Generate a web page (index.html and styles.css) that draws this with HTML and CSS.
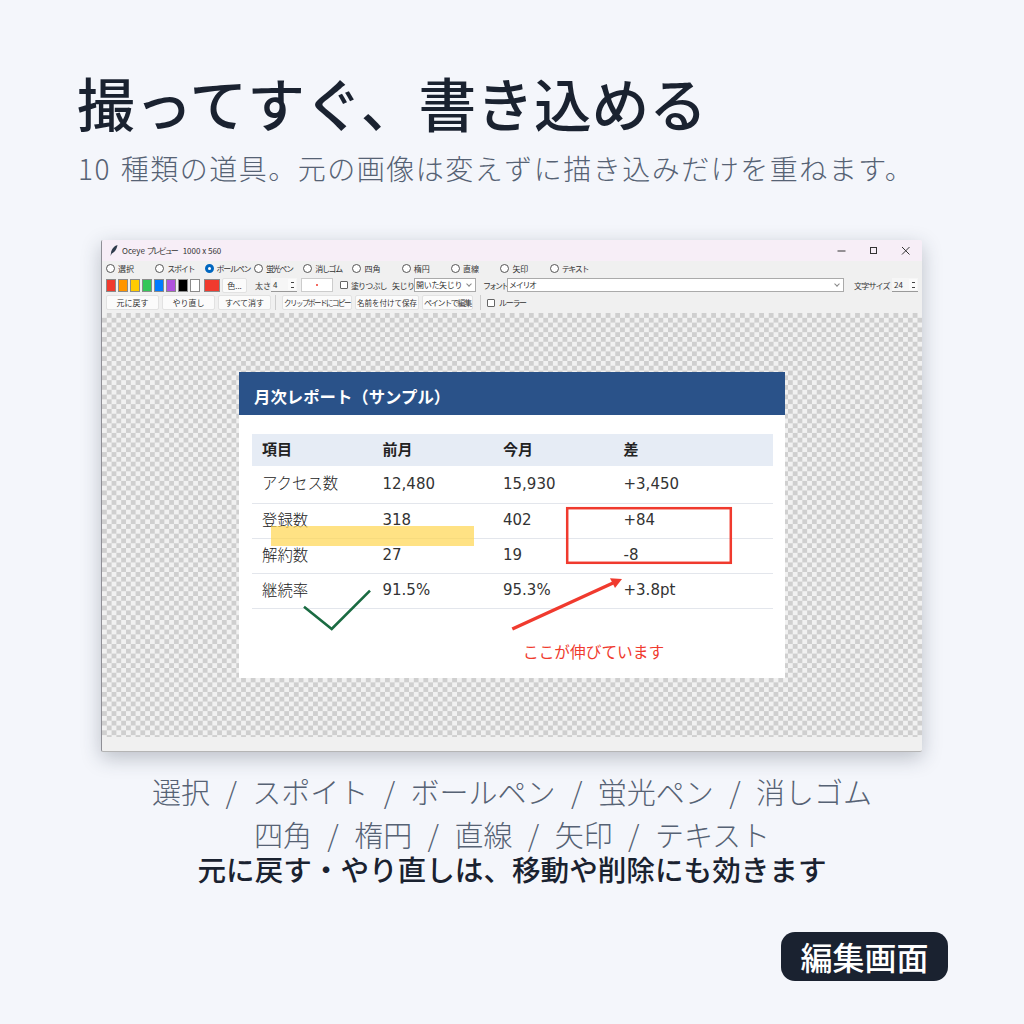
FILE: index.html
```html
<!DOCTYPE html>
<html lang="ja">
<head>
    <meta charset="UTF-8">
    <title>編集画面</title>
    <link rel="stylesheet" href="styles.css">
</head>
<body>
    <h1 class="title">撮ってすぐ、書き込める</h1>
    <p class="subtitle">10 種類の道具。元の画像は変えずに描き込みだけを重ねます。</p>

    <div class="window">
        <div class="titlebar">
            <svg class="feather" width="8" height="11" viewBox="0 0 8 11"><path d="M7.500 0C4 1 1.500 4 1 8L0.500 11L1.800 8.500C4.500 7.500 6.800 4 7.500 0Z" fill="#2f3b4c"/></svg>
            <span class="app-name">Oceye <span class="tight">プレビュー</span><span class="app-size">1000 x 560</span></span>
            <div class="win-buttons">
                <svg width="10" height="10" viewBox="0 0 10 10"><path d="M0.500 5H8.500" stroke="#333" fill="none"/></svg>
                <svg width="10" height="10" viewBox="0 0 10 10"><rect x="1.500" y="1.500" width="6" height="6" stroke="#333" fill="none"/></svg>
                <svg width="10" height="10" viewBox="0 0 10 10"><path d="M1 1L8.500 8.500M8.500 1L1 8.500" stroke="#333" fill="none"/></svg>
            </div>
        </div>

        <div class="tools">
            <label class="tool"><i class="radio"></i>選択</label>
            <label class="tool tight"><i class="radio"></i>スポイト</label>
            <label class="tool tight"><i class="radio on"></i>ボールペン</label>
            <label class="tool tight"><i class="radio"></i>蛍光ペン</label>
            <label class="tool tight"><i class="radio"></i>消しゴム</label>
            <label class="tool"><i class="radio"></i>四角</label>
            <label class="tool"><i class="radio"></i>楕円</label>
            <label class="tool"><i class="radio"></i>直線</label>
            <label class="tool"><i class="radio"></i>矢印</label>
            <label class="tool tight"><i class="radio"></i>テキスト</label>
        </div>

        <div class="options">
            <div class="swatches">
                <i class="swatch c-red"></i><i class="swatch c-orange"></i><i class="swatch c-yellow"></i><i class="swatch c-green"></i><i class="swatch c-blue"></i><i class="swatch c-purple"></i><i class="swatch c-black"></i><i class="swatch c-white"></i>
            </div>
            <i class="current c-red"></i>
            <span class="btn color-btn">色...</span>
            <span class="lbl size-lbl">太さ</span>
            <span class="spin size-spin">4<b class="arrows"></b></span>
            <span class="preview"><i></i></span>
            <label class="check fill-check"><i class="box"></i>塗りつぶし</label>
            <span class="lbl arrow-lbl">矢じり</span>
            <span class="combo arrow-combo">開いた矢じり</span>
            <span class="lbl font-lbl">フォント</span>
            <span class="combo font-combo tight">メイリオ</span>
            <span class="lbl text-lbl">文字サイズ</span>
            <span class="spin text-spin">24<b class="arrows"></b></span>
        </div>

        <div class="actions">
            <span class="btn wide">元に戻す</span>
            <span class="btn wide">やり直し</span>
            <span class="btn wide">すべて消す</span>
            <i class="sep"></i>
            <span class="btn copy-btn">クリップボードにコピー</span>
            <span class="btn save-btn">名前を付けて保存</span>
            <span class="btn paint-btn tight">ペイントで編集</span>
            <i class="sep"></i>
            <label class="check ruler tight"><i class="box"></i>ルーラー</label>
        </div>

        <div class="canvas">
            <div class="report">
                <div class="report-head">月次レポート（サンプル）</div>
                <table class="report-table">
                    <thead>
                        <tr><th>項目</th><th>前月</th><th>今月</th><th>差</th></tr>
                    </thead>
                    <tbody>
                        <tr class="first"><td>アクセス数</td><td>12,480</td><td>15,930</td><td>+3,450</td></tr>
                        <tr><td>登録数</td><td>318</td><td>402</td><td>+84</td></tr>
                        <tr><td>解約数</td><td>27</td><td>19</td><td>-8</td></tr>
                        <tr><td>継続率</td><td>91.5%</td><td>95.3%</td><td>+3.8pt</td></tr>
                    </tbody>
                </table>

                <i class="marker"></i>
                <svg class="ink" width="546" height="306" viewBox="0 0 546 306">
                    <rect x="328.200" y="136.200" width="163.600" height="54.600" fill="none" stroke="#f03a2e" stroke-width="2.500"/>
                    <path d="M65 234.700L92.700 257L131 218.700" fill="none" stroke="#1a6b42" stroke-width="2.600"/>
                    <path d="M273.300 257L374 211" fill="none" stroke="#f03a2e" stroke-width="3.400"/>
                    <path d="M383 207L371 206.300L376 216Z" fill="#f03a2e"/>
                </svg>
                <span class="note">ここが伸びています</span>
            </div>
        </div>
        <div class="statusbar"></div>
    </div>

    <p class="tool-list">選択 / スポイト / ボールペン / 蛍光ペン / 消しゴム</p>
    <p class="tool-list second">四角 / 楕円 / 直線 / 矢印 / テキスト</p>
    <p class="undo-note">元に戻す・やり直しは、移動や削除にも効きます</p>

    <div class="footer">
        <span class="badge">編集画面</span>
    </div>
</body>
</html>
```

FILE: styles.css
```css
body {
    margin: 0;
    height: 1024px;
    overflow: hidden;
    background: #f4f6fb;
    font-family: "Noto Sans CJK JP", "Noto Sans", sans-serif;
    color: #1a2230;
}
.title {
    margin: 0;
    padding: 63px 0 0 77px;
    font-size: 57.700px;
    line-height: 78px;
    font-weight: 500;
}
.subtitle {
    margin: 0;
    padding: 6px 0 0 78px;
    font-size: 28px;
    line-height: 42px;
    font-weight: 300;
    letter-spacing: 1.500px;
    word-spacing: 2px;
    color: #566274;
}
.window {
    position: relative;
    width: 821px;
    height: 512px;
    margin: 51px 0 0 101px;
    background: #f0f0f0;
    border-left: 1px solid #8f8f96;
    border-bottom: 1px solid #b5b5b5;
    box-sizing: border-box;
    border-radius: 2px;
    box-shadow: 0 6px 20px rgba(40, 50, 70, 0.28);
    font-size: 8px;
    color: #333;
    overflow: hidden;
}
.tight {
    letter-spacing: -1.300px;
}
.titlebar {
    display: flex;
    align-items: center;
    height: 21px;
    padding-left: 8px;
    background: #f7eef7;
}
.app-name {
    margin-left: 4px;
    font-size: 8px;
    white-space: nowrap;
}
.app-name .tight {
    letter-spacing: -2px;
}
.app-size {
    margin-left: 6px;
}
.win-buttons {
    display: flex;
    gap: 22px;
    margin-left: auto;
    margin-right: 11px;
}
.tools {
    display: flex;
    align-items: center;
    height: 15px;
    padding-left: 4px;
}
.tool {
    display: flex;
    align-items: center;
    gap: 3px;
    width: 49.300px;
    white-space: nowrap;
}
.radio {
    flex: none;
    box-sizing: border-box;
    width: 9px;
    height: 9px;
    border: 1px solid #555;
    border-radius: 50%;
    background: #fff;
}
.radio.on {
    border: 3px solid #0067c0;
}
.options {
    display: flex;
    align-items: center;
    height: 16px;
    margin-top: 1px;
    padding-left: 4px;
}
.options > * {
    flex: none;
}
.swatches {
    display: flex;
    gap: 2px;
}
.swatch {
    box-sizing: border-box;
    width: 10px;
    height: 13px;
    border: 1px solid #8a8a8a;
}
.c-red { background: #f03a2e; }
.c-orange { background: #ff9500; }
.c-yellow { background: #ffcc00; }
.c-green { background: #34c759; }
.c-blue { background: #007aff; }
.c-purple { background: #af52de; }
.c-black { background: #000; }
.c-white { background: #fff; }
.current {
    box-sizing: border-box;
    width: 16px;
    height: 13px;
    margin-left: 4px;
    border: 1px solid #8a8a8a;
}
.btn {
    display: flex;
    flex: none;
    align-items: center;
    justify-content: center;
    box-sizing: border-box;
    height: 15px;
    background: #fbfbfb;
    border: 1px solid #e2e2e2;
    border-radius: 2px;
    white-space: nowrap;
}
.color-btn {
    width: 25px;
    margin-left: 2px;
}
.lbl {
    white-space: nowrap;
}
.size-lbl { margin-left: 8px; width: 16px; }
.spin {
    position: relative;
    box-sizing: border-box;
    height: 14px;
    line-height: 13px;
    border-bottom: 1px solid #999;
    background: #f6f6f6;
    padding-left: 2px;
}
.size-spin {
    width: 26px;
}
.text-spin {
    width: 26px;
    margin-left: 1px;
}
.arrows {
    position: absolute;
    right: 1px;
    top: 1px;
    width: 8px;
    height: 11px;
    background: linear-gradient(#444, #444) 50% 3px / 3px 1px no-repeat, linear-gradient(#444, #444) 50% 8px / 3px 1px no-repeat, #fbfbfb;
}
.preview {
    display: flex;
    align-items: center;
    justify-content: center;
    box-sizing: border-box;
    width: 32px;
    height: 14px;
    margin-left: 4px;
    background: #fff;
    border: 1px solid #ccc;
}
.preview i {
    width: 2px;
    height: 2px;
    border-radius: 50%;
    background: #f03a2e;
}
.check {
    display: flex;
    align-items: center;
    gap: 3px;
    white-space: nowrap;
}
.fill-check {
    width: 52px;
    margin-left: 7px;
    letter-spacing: -0.900px;
}
.box {
    flex: none;
    box-sizing: border-box;
    width: 8px;
    height: 8px;
    border: 1px solid #666;
    border-radius: 1px;
    background: #fff;
}
.arrow-lbl {
    width: 21px;
    letter-spacing: -0.500px;
}
.combo {
    position: relative;
    box-sizing: border-box;
    height: 14px;
    line-height: 12px;
    margin-left: 1px;
    padding-left: 1px;
    background: #fff;
    border: 1px solid #aaa;
}
.combo::after {
    content: "";
    position: absolute;
    right: 4px;
    top: 3px;
    width: 3px;
    height: 3px;
    border-right: 1px solid #888;
    border-bottom: 1px solid #888;
    transform: rotate(45deg);
}
.arrow-combo {
    width: 62px;
    letter-spacing: -0.300px;
}
.font-lbl {
    width: 23px;
    margin-left: 7px;
    letter-spacing: -2px;
}
.font-combo { width: 337px; }
.text-lbl {
    width: 37px;
    margin-left: 10px;
    letter-spacing: -0.800px;
}
.actions {
    display: flex;
    align-items: center;
    height: 17px;
    margin-top: 1px;
    padding-left: 4px;
}
.btn.wide {
    width: 53px;
    margin-right: 3px;
}
.sep {
    flex: none;
    width: 1px;
    height: 15px;
    margin: 0 6px 0 1px;
    background: #ccc;
}
.copy-btn {
    width: 70px;
    font-size: 7.500px;
    letter-spacing: -1.500px;
}
.save-btn {
    width: 64px;
    margin-left: 3px;
    font-size: 7.500px;
}
.paint-btn {
    width: 51px;
    margin: 0 6px 0 3px;
}
.ruler {
    gap: 4px;
}
.canvas {
    height: 424px;
    margin-top: 2px;
    padding: 59px 0 0 137px;
    box-sizing: border-box;
    background: repeating-conic-gradient(#cfcfcf 0 25%, #f1f1f1 0 50%) 0 0 / 9.600px 9.600px;
}
.report {
    position: relative;
    width: 546px;
    height: 306px;
    background: #fff;
    color: #333;
}
.report-head {
    height: 43px;
    padding-left: 15px;
    background: #2a5289;
    color: #fff;
    font-size: 16.400px;
    font-weight: 700;
    line-height: 48px;
}
.report-table {
    width: 521px;
    margin: 19px 0 0 13px;
    border-collapse: collapse;
    table-layout: fixed;
    font-family: "DejaVu Sans", "Noto Sans CJK JP", sans-serif;
    font-size: 15px;
    line-height: 18px;
}
.report-table th,
.report-table td {
    padding: 0 0 2px 10px;
    text-align: left;
}
.report-table th {
    width: 110.500px;
    height: 30px;
    background: #e6ecf5;
    color: #222;
    font-family: "Noto Sans CJK JP", sans-serif;
    font-size: 15px;
    font-weight: 700;
}
.report-table th:last-child {
    width: auto;
}
.report-table td {
    height: 32px;
    border-bottom: 1px solid #e3e6ec;
}
.report-table td:first-child {
    height: 29px;
    padding-bottom: 5px;
    font-family: "Noto Sans CJK JP", sans-serif;
    font-size: 15.400px;
    font-weight: 300;
    color: #222;
}
.report-table .first td {
    height: 35px;
}
.report-table .first td:first-child {
    height: 32px;
}
.marker {
    position: absolute;
    left: 32px;
    top: 154px;
    width: 203px;
    height: 20px;
    background: rgba(255, 214, 80, 0.7);
}
.ink {
    position: absolute;
    left: 0;
    top: 0;
}
.note {
    position: absolute;
    left: 284px;
    top: 268px;
    font-size: 15.700px;
    line-height: 24px;
    color: #f03a2e;
}
.statusbar {
    height: 14px;
}
.tool-list {
    margin: 18px 0 0 0;
    text-align: center;
    font-size: 29px;
    line-height: 43px;
    font-weight: 300;
    color: #566274;
    word-spacing: 9px;
}
.tool-list.second {
    margin-top: 0;
}
.undo-note {
    margin: 0;
    text-align: center;
    font-size: 28.600px;
    line-height: 26px;
    font-weight: 500;
    color: #1a2230;
}
.footer {
    display: flex;
    justify-content: flex-end;
    padding: 50px 76px 0 0;
}
.badge {
    width: 167px;
    height: 49px;
    border-radius: 14px;
    background: #1a2230;
    color: #fff;
    font-size: 32px;
    font-weight: 500;
    line-height: 49px;
    text-align: center;
}
```
